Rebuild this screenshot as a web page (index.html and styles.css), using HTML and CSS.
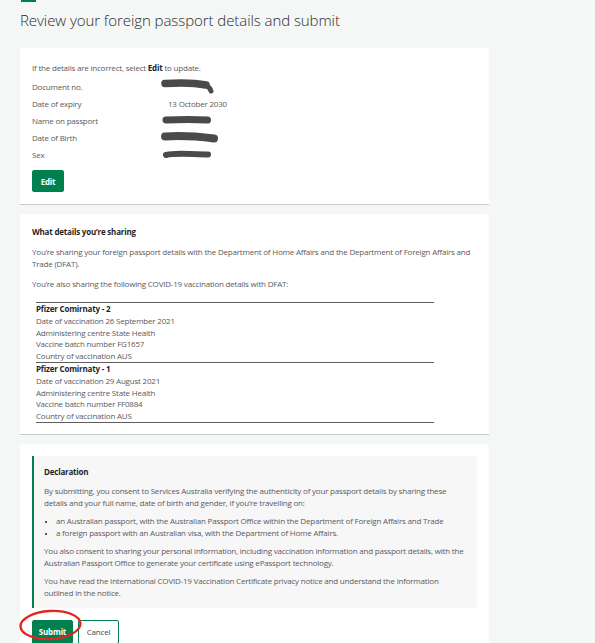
FILE: index.html
```html
<!DOCTYPE html>
<html lang="en">
<head>
<meta charset="utf-8">
<title>Review your foreign passport details and submit</title>
<link rel="stylesheet" href="styles.css">
</head>
<body>
<div class="page">
  <div class="tabline"></div>
  <h1 class="title">Review your foreign passport details and submit</h1>

  <section class="card card-details">
    <p class="intro">If the details are incorrect, select <b>Edit</b> to update.</p>
    <dl class="details">
      <div class="row"><dt>Document no.</dt><dd><svg class="redact" width="64" height="17" viewBox="0 0 64 17"><path d="M5 5.5 C20 4.5,36 5,46 7" stroke="#4a4a4a" stroke-width="7.5" stroke-linecap="round" fill="none"/><path d="M45 7 Q50 9 51 13" stroke="#4a4a4a" stroke-width="5" stroke-linecap="round" fill="none"/></svg></dd></div>
      <div class="row"><dt>Date of expiry</dt><dd>13 October 2030</dd></div>
      <div class="row"><dt>Name on passport</dt><dd><svg class="redact" width="64" height="17" viewBox="0 0 64 17"><path d="M6 8 C20 7.5,36 7.5,47.5 8" stroke="#4a4a4a" stroke-width="7" stroke-linecap="round" fill="none"/></svg></dd></div>
      <div class="row"><dt>Date of Birth</dt><dd><svg class="redact" width="64" height="17" viewBox="0 0 64 17"><path d="M5 7.5 C20 6.5,38 7.5,54 9.5" stroke="#4a4a4a" stroke-width="8" stroke-linecap="round" fill="none"/></svg></dd></div>
      <div class="row"><dt>Sex</dt><dd><svg class="redact" width="64" height="17" viewBox="0 0 64 17"><path d="M6 9 C14 7,24 7.5,48 8.5" stroke="#4a4a4a" stroke-width="6" stroke-linecap="round" fill="none"/></svg></dd></div>
    </dl>
    <button class="btn btn-primary btn-edit">Edit</button>
  </section>

  <section class="card card-sharing">
    <h2 class="heading">What details you’re sharing</h2>
    <p class="text para">You’re sharing your foreign passport details with the Department of Home Affairs and the Department of Foreign Affairs and Trade (DFAT).</p>
    <p class="text para-last">You’re also sharing the following COVID-19 vaccination details with DFAT:</p>
    <div class="vax">
      <div class="vax-group">
        <div class="vax-title">Pfizer Comirnaty - 2</div>
        <div class="vax-line">Date of vaccination 26 September 2021</div>
        <div class="vax-line">Administering centre State Health</div>
        <div class="vax-line">Vaccine batch number FG1657</div>
        <div class="vax-line">Country of vaccination AUS</div>
      </div>
      <div class="vax-group">
        <div class="vax-title">Pfizer Comirnaty - 1</div>
        <div class="vax-line">Date of vaccination 29 August 2021</div>
        <div class="vax-line">Administering centre State Health</div>
        <div class="vax-line">Vaccine batch number FF0884</div>
        <div class="vax-line">Country of vaccination AUS</div>
      </div>
    </div>
  </section>

  <section class="card card-declaration">
    <div class="declaration">
      <h2 class="heading decl-heading">Declaration</h2>
      <p class="text decl-para">By submitting, you consent to Services Australia verifying the authenticity of your passport details by sharing these details and your full name, date of birth and gender, if you’re travelling on:</p>
      <ul class="text decl-list">
        <li>an Australian passport, with the Australian Passport Office within the Department of Foreign Affairs and Trade</li>
        <li>a foreign passport with an Australian visa, with the Department of Home Affairs.</li>
      </ul>
      <p class="text decl-para">You also consent to sharing your personal information, including vaccination information and passport details, with the Australian Passport Office to generate your certificate using ePassport technology.</p>
      <p class="text decl-para decl-last">You have read the International COVID-19 Vaccination Certificate privacy notice and understand the information outlined in the notice.</p>
    </div>
    <div class="actions">
      <button class="btn btn-primary btn-submit">Submit</button>
      <button class="btn btn-secondary">Cancel</button>
      <svg class="circle-mark" width="70" height="36" viewBox="0 0 70 36"><ellipse cx="34.5" cy="18" rx="30" ry="14" fill="none" stroke="#e32420" stroke-width="2.3" transform="rotate(-3 34.5 18)"/></svg>
    </div>
  </section>
</div>
</body>
</html>
```

FILE: styles.css
```css
* { box-sizing: border-box; }

html, body {
  margin: 0;
  padding: 0;
  background: #f4f7f6;
}

body {
  font-family: "Open Sans", "Noto Sans", sans-serif;
  font-size: 8px;
  letter-spacing: -0.2px;
  color: #5a5a5e;
  overflow: hidden;
}

.page {
  padding: 0 106px 0 20px;
}

.tabline {
  width: 15px;
  height: 2px;
  margin-left: 1px;
  background: #00804f;
}

.title {
  margin: 8px 0 0;
  font-size: 15px;
  line-height: 20px;
  font-weight: 300;
  letter-spacing: -0.07px;
  color: #2c2c2c;
}

.card {
  background: #fff;
  border-radius: 3px 3px 0 0;
  border-bottom: 1px solid #c5cbc9;
  padding: 12px 12px 11px;
  margin-top: 9px;
}

.card-details {
  margin-top: 18px;
  padding-top: 14px;
  padding-bottom: 12px;
}

.intro {
  margin: 0 0 4px;
  line-height: 12px;
}

.intro b { color: #1d1d1d; font-weight: 700; }

.details { margin: 0; }

.row {
  display: grid;
  grid-template-columns: 136px 1fr;
  height: 17px;
  align-items: center;
}

.row dt, .row dd { margin: 0; line-height: 17px; height: 17px; }

.redact {
  display: block;
  margin-left: -8px;
}

.btn {
  font-family: inherit;
  font-size: 8px;
  letter-spacing: -0.2px;
  border-radius: 2px;
  cursor: pointer;
  padding: 0;
}

.btn-primary {
  background: #00804f;
  color: #fff;
  font-weight: 700;
  border: 1px solid #00804f;
}

.btn-edit {
  display: block;
  margin-top: 7px;
  width: 32px;
  height: 22px;
}

.heading {
  margin: 0;
  font-size: 8px;
  line-height: 12px;
  font-weight: 700;
  color: #1f1f1f;
}

.text { line-height: 12px; }

.card-sharing .heading { margin-bottom: 8px; }

.para { margin: 0 0 8px; }
.para-last { margin: 0 0 12px; }

.vax {
  margin-left: 4px;
  width: 398px;
  border-top: 1px solid #5e5e5e;
}

.vax-group {
  border-bottom: 1px solid #5e5e5e;
}

.vax-title, .vax-line {
  line-height: 11.8px;
}

.vax-title { font-weight: 700; color: #1f1f1f; }

.card-declaration {
  padding-bottom: 30px;
  border-bottom: none;
}

.declaration {
  background: #f7f7f7;
  border-left: 2px solid #00804f;
  padding: 10px 10px 9px 10px;
}

.decl-heading { margin-bottom: 7px; }

.decl-para { margin: 0 0 6px; }
.decl-last { margin-bottom: 0; }

.decl-list {
  margin: 0 0 6px;
  padding-left: 12px;
}

.decl-list li::marker { color: #222; font-size: 7px; }

.actions {
  position: relative;
  display: flex;
  gap: 5px;
  margin-top: 12px;
}

.btn-submit { width: 41px; height: 24px; }

.btn-secondary {
  width: 41px;
  height: 24px;
  background: #fff;
  border: 1px solid #00804f;
  color: #3b4a43;
}

.circle-mark {
  position: absolute;
  left: -16px;
  top: -13px;
  pointer-events: none;
}
```
